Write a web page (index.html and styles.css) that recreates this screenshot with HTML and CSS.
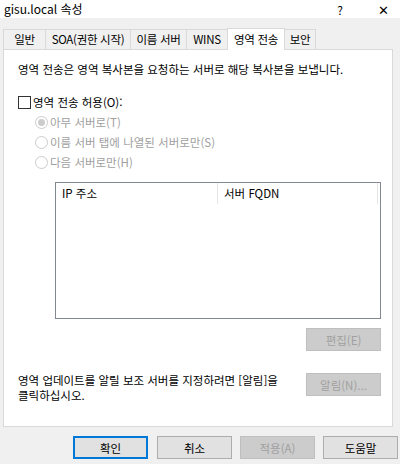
FILE: index.html
```html
<!DOCTYPE html>
<html lang="ko">
<head>
<meta charset="utf-8">
<link rel="stylesheet" href="styles.css">
</head>
<body>
<div class="window">
  <div class="titlebar">
    <span class="title">gisu.local 속성</span>
    <span class="tb-btns"><span class="help">?</span><span class="close">✕</span></span>
  </div>
  <div class="tabs">
    <div class="tab t1">일반</div>
    <div class="tab t2">SOA(권한 시작)</div>
    <div class="tab t3">이름 서버</div>
    <div class="tab t4">WINS</div>
    <div class="tab t5 active">영역 전송</div>
    <div class="tab t6">보안</div>
  </div>
  <div class="panel">
    <p class="desc">영역 전송은 영역 복사본을 요청하는 서버로 해당 복사본을 보냅니다.</p>
    <label class="check"><span class="box"></span>영역 전송 허용(O):</label>
    <div class="radios">
      <div class="radio"><span class="dot on"></span>아무 서버로(T)</div>
      <div class="radio"><span class="dot"></span>이름 서버 탭에 나열된 서버로만(S)</div>
      <div class="radio"><span class="dot"></span>다음 서버로만(H)</div>
    </div>
    <div class="list">
      <div class="list-head">
        <div class="col c1">IP 주소</div>
        <div class="col c2">서버 FQDN</div>
      </div>
    </div>
    <div class="row-right"><button class="btn disabled">편집(E)</button></div>
    <div class="notify">
      <p class="notify-text">영역 업데이트를 알릴 보조 서버를 지정하려면 [알림]을<br>클릭하십시오.</p>
      <button class="btn disabled">알림(N)...</button>
    </div>
  </div>
  <div class="footer">
    <button class="btn default">확인</button>
    <button class="btn">취소</button>
    <button class="btn disabled">적용(A)</button>
    <button class="btn">도움말</button>
  </div>
</div>
</body>
</html>
```
FILE: styles.css
```css
* { box-sizing: border-box; }
html, body { margin: 0; padding: 0; }
body {
  width: 400px;
  height: 464px;
  background: #f0f0f0;
  font-family: "Noto Sans CJK KR", "Noto Sans", sans-serif;
  font-size: 11.5px;
  color: #000;
  overflow: hidden;
}
.window { display: flex; flex-direction: column; height: 464px; }
.titlebar {
  height: 18px;
  background: #ffffff;
  display: flex;
  align-items: center;
  justify-content: space-between;
  padding: 0 0 0 4px;
}
.title { font-size: 12px; line-height: 18px; }
.tb-btns { display: flex; align-items: center; }
.help { width: 30px; text-align: center; font-size: 12px; margin-right: 13px; }
.close { width: 30px; text-align: center; font-size: 13px; margin-right: 2px; }
.tabs {
  display: flex;
  align-items: flex-end;
  padding: 0 0 0 3px;
  margin-top: 11px;
  height: 20px;
  position: relative;
  z-index: 1;
}
.tab {
  height: 20px;
  border: 1px solid #d9d9d9;
  border-right: none;
  border-bottom: none;
  background: #f0f0f0;
  line-height: 18px;
  white-space: nowrap;
  text-align: center;
  letter-spacing: -0.3px;
}
.t1 { width: 42px; }
.t2 { width: 85px; }
.t3 { width: 56px; }
.t4 { width: 41px; }
.t5 { width: 58px; }
.t6 { width: 31px; border-right: 1px solid #d9d9d9; }
.tab.active {
  background: #ffffff;
  height: 22px;
  margin-bottom: -1px;
  border-right: 1px solid #d9d9d9;
  padding-top: 1px;
}
.tab.active + .tab { border-left: none; }
.panel {
  margin: 0 7px 0 3px;
  height: 378px;
  background: #ffffff;
  border: 1px solid #d9d9d9;
  padding: 0 0 0 14px;
  display: flex;
  flex-direction: column;
}
.desc { margin: 11px 0 0; line-height: 16px; }
.check { display: flex; align-items: center; margin-top: 17px; line-height: 16px; }
.box {
  width: 13px; height: 13px;
  border: 1px solid #333;
  background: #fff;
  margin-right: 2px;
}
.radios { padding-left: 17px; color: #a0a0a0; }
.radio { display: flex; align-items: center; height: 16px; margin-top: 4px; }
.dot {
  width: 13px; height: 13px;
  border: 1px solid #cccccc;
  border-radius: 50%;
  margin-right: 2px;
  display: flex;
  align-items: center;
  justify-content: center;
}
.dot.on::after {
  content: "";
  width: 7px; height: 7px;
  border-radius: 50%;
  background: #cccccc;
}
.list {
  margin: 12px 11px 0 37px;
  height: 137px;
  border: 1px solid #828790;
  background: #fff;
}
.list-head { display: flex; height: 21px; }
.col { line-height: 20px; padding-left: 6px; border-right: 1px solid #e5e5e5; }
.c1 { width: 162px; }
.c2 { width: 160px; }
.btn {
  font-family: inherit;
  font-size: 11.5px;
  width: 75px;
  height: 23px;
  border: 1px solid #adadad;
  background: #e1e1e1;
  color: #000;
  padding: 0;
  margin: 0;
}
.btn.disabled { background: #cccccc; border-color: #bfbfbf; color: #a0a0a0; }
.btn.default { border: 2px solid #0078d7; }
.row-right { display: flex; justify-content: flex-end; margin: 9px 11px 0 0; }
.notify {
  display: flex;
  justify-content: space-between;
  align-items: flex-start;
  margin: 22px 11px 0 0;
}
.notify-text { margin: 0; line-height: 15px; }
.footer {
  display: flex;
  gap: 8px;
  padding: 9px 0 0 73px;
}
.footer .btn:nth-child(2) { margin-left: 1px; }
```
